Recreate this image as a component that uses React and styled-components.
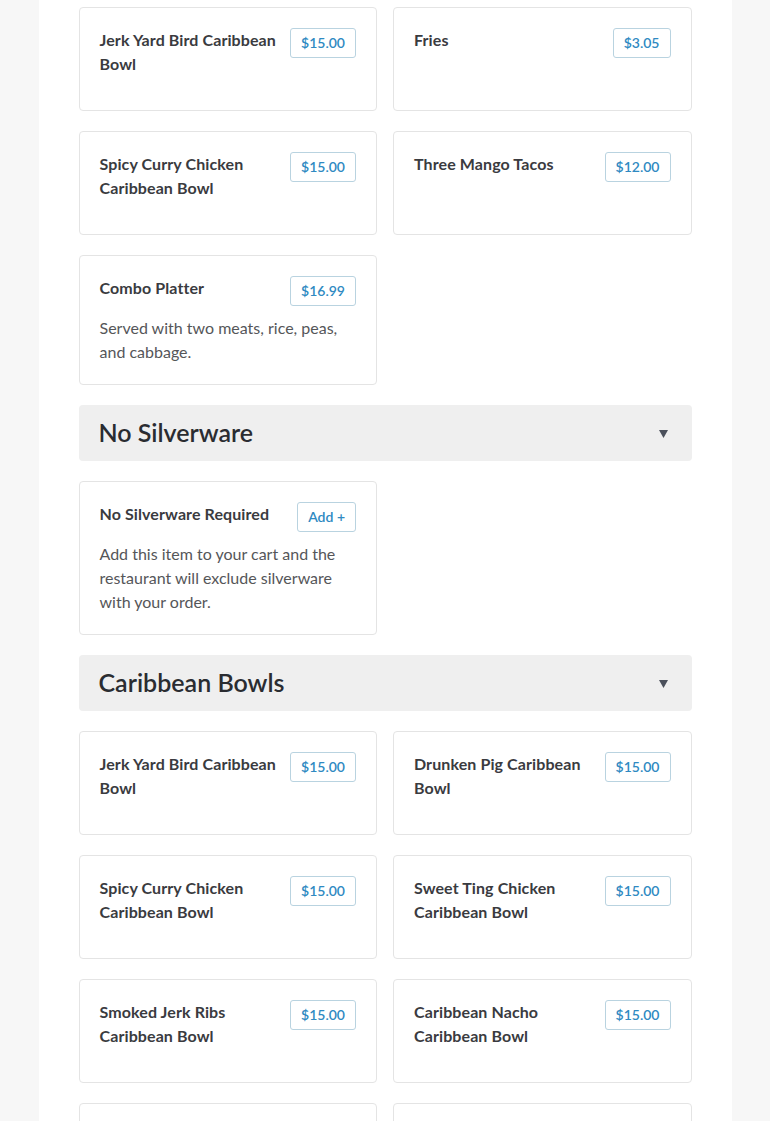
import styled, { createGlobalStyle } from "styled-components";

const GlobalStyle = createGlobalStyle`
  body {
    margin: 0;
    background: #f7f7f7;
    font-family: Lato, "Open Sans", sans-serif;
  }
`;

const Page = styled.div`
  width: 693px;
  margin: 0 auto;
  background: #fff;
  padding: 7px 40px 40px;
  box-sizing: border-box;
  min-height: 1121px;
  display: flex;
  flex-direction: column;
  gap: 20px;
`;

const Grid = styled.div`
  display: grid;
  grid-template-columns: 1fr 1fr;
  gap: 20px 16px;
`;

const Card = styled.div`
  border: 1px solid #e4e4e4;
  border-radius: 4px;
  padding: 20px;
  min-height: 104px;
  box-sizing: border-box;
  display: flex;
  flex-direction: column;
  gap: 10px;
`;

const CardTop = styled.div`
  display: flex;
  justify-content: space-between;
  align-items: flex-start;
  gap: 12px;
`;

const Title = styled.div`
  font-size: 16px;
  font-weight: 700;
  line-height: 24px;
  color: #3a3b3f;
  letter-spacing: 0.1px;
`;

const Badge = styled.button`
  flex: none;
  height: 30px;
  padding: 0 10px;
  border: 1px solid #b9d3e0;
  border-radius: 3px;
  background: #fff;
  color: #2f8ac2;
  font-family: inherit;
  font-size: 14px;
  font-weight: 600;
  line-height: 28px;
`;

const Desc = styled.p`
  margin: 0;
  font-size: 16px;
  line-height: 24px;
  color: #555659;
`;

const SectionHead = styled.div`
  height: 56px;
  background: #efefef;
  border-radius: 4px;
  display: flex;
  align-items: center;
  justify-content: space-between;
  padding: 0 24px 3px 20px;
  box-sizing: border-box;
  h2 {
    margin: 0;
    font-size: 25px;
    font-weight: 600;
    color: #2a2c31;
  }
  svg {
    margin-top: 3px;
  }
`;

const Caret = () => (
  <svg width="9" height="9" viewBox="0 0 9 9">
    <path d="M0 1h9L4.5 9z" fill="#4b505b" />
  </svg>
);

function Item({ name, price, desc }) {
  return (
    <Card>
      <CardTop>
        <Title>{name}</Title>
        <Badge>{price}</Badge>
      </CardTop>
      {desc && <Desc>{desc}</Desc>}
    </Card>
  );
}

const top = [
  { name: "Jerk Yard Bird Caribbean Bowl", price: "$15.00" },
  { name: "Fries", price: "$3.05" },
  { name: "Spicy Curry Chicken Caribbean Bowl", price: "$15.00" },
  { name: "Three Mango Tacos", price: "$12.00" },
  {
    name: "Combo Platter",
    price: "$16.99",
    desc: "Served with two meats, rice, peas, and cabbage.",
  },
];

const bowls = [
  { name: "Jerk Yard Bird Caribbean Bowl", price: "$15.00" },
  { name: "Drunken Pig Caribbean Bowl", price: "$15.00" },
  { name: "Spicy Curry Chicken Caribbean Bowl", price: "$15.00" },
  { name: "Sweet Ting Chicken Caribbean Bowl", price: "$15.00" },
  { name: "Smoked Jerk Ribs Caribbean Bowl", price: "$15.00" },
  { name: "Caribbean Nacho Caribbean Bowl", price: "$15.00" },
  { name: "Oxtail Caribbean Bowl", price: "$15.00" },
  { name: "Veggie Caribbean Bowl", price: "$15.00" },
];

export default function App() {
  return (
    <>
      <GlobalStyle />
      <Page>
        <Grid>
          {top.map((it, i) => (
            <Item key={i} {...it} />
          ))}
        </Grid>
        <SectionHead>
          <h2>No Silverware</h2>
          <Caret />
        </SectionHead>
        <Grid>
          <Item
            name="No Silverware Required"
            price="Add +"
            desc="Add this item to your cart and the restaurant will exclude silverware with your order."
          />
        </Grid>
        <SectionHead>
          <h2>Caribbean Bowls</h2>
          <Caret />
        </SectionHead>
        <Grid>
          {bowls.map((it, i) => (
            <Item key={i} {...it} />
          ))}
        </Grid>
      </Page>
    </>
  );
}
